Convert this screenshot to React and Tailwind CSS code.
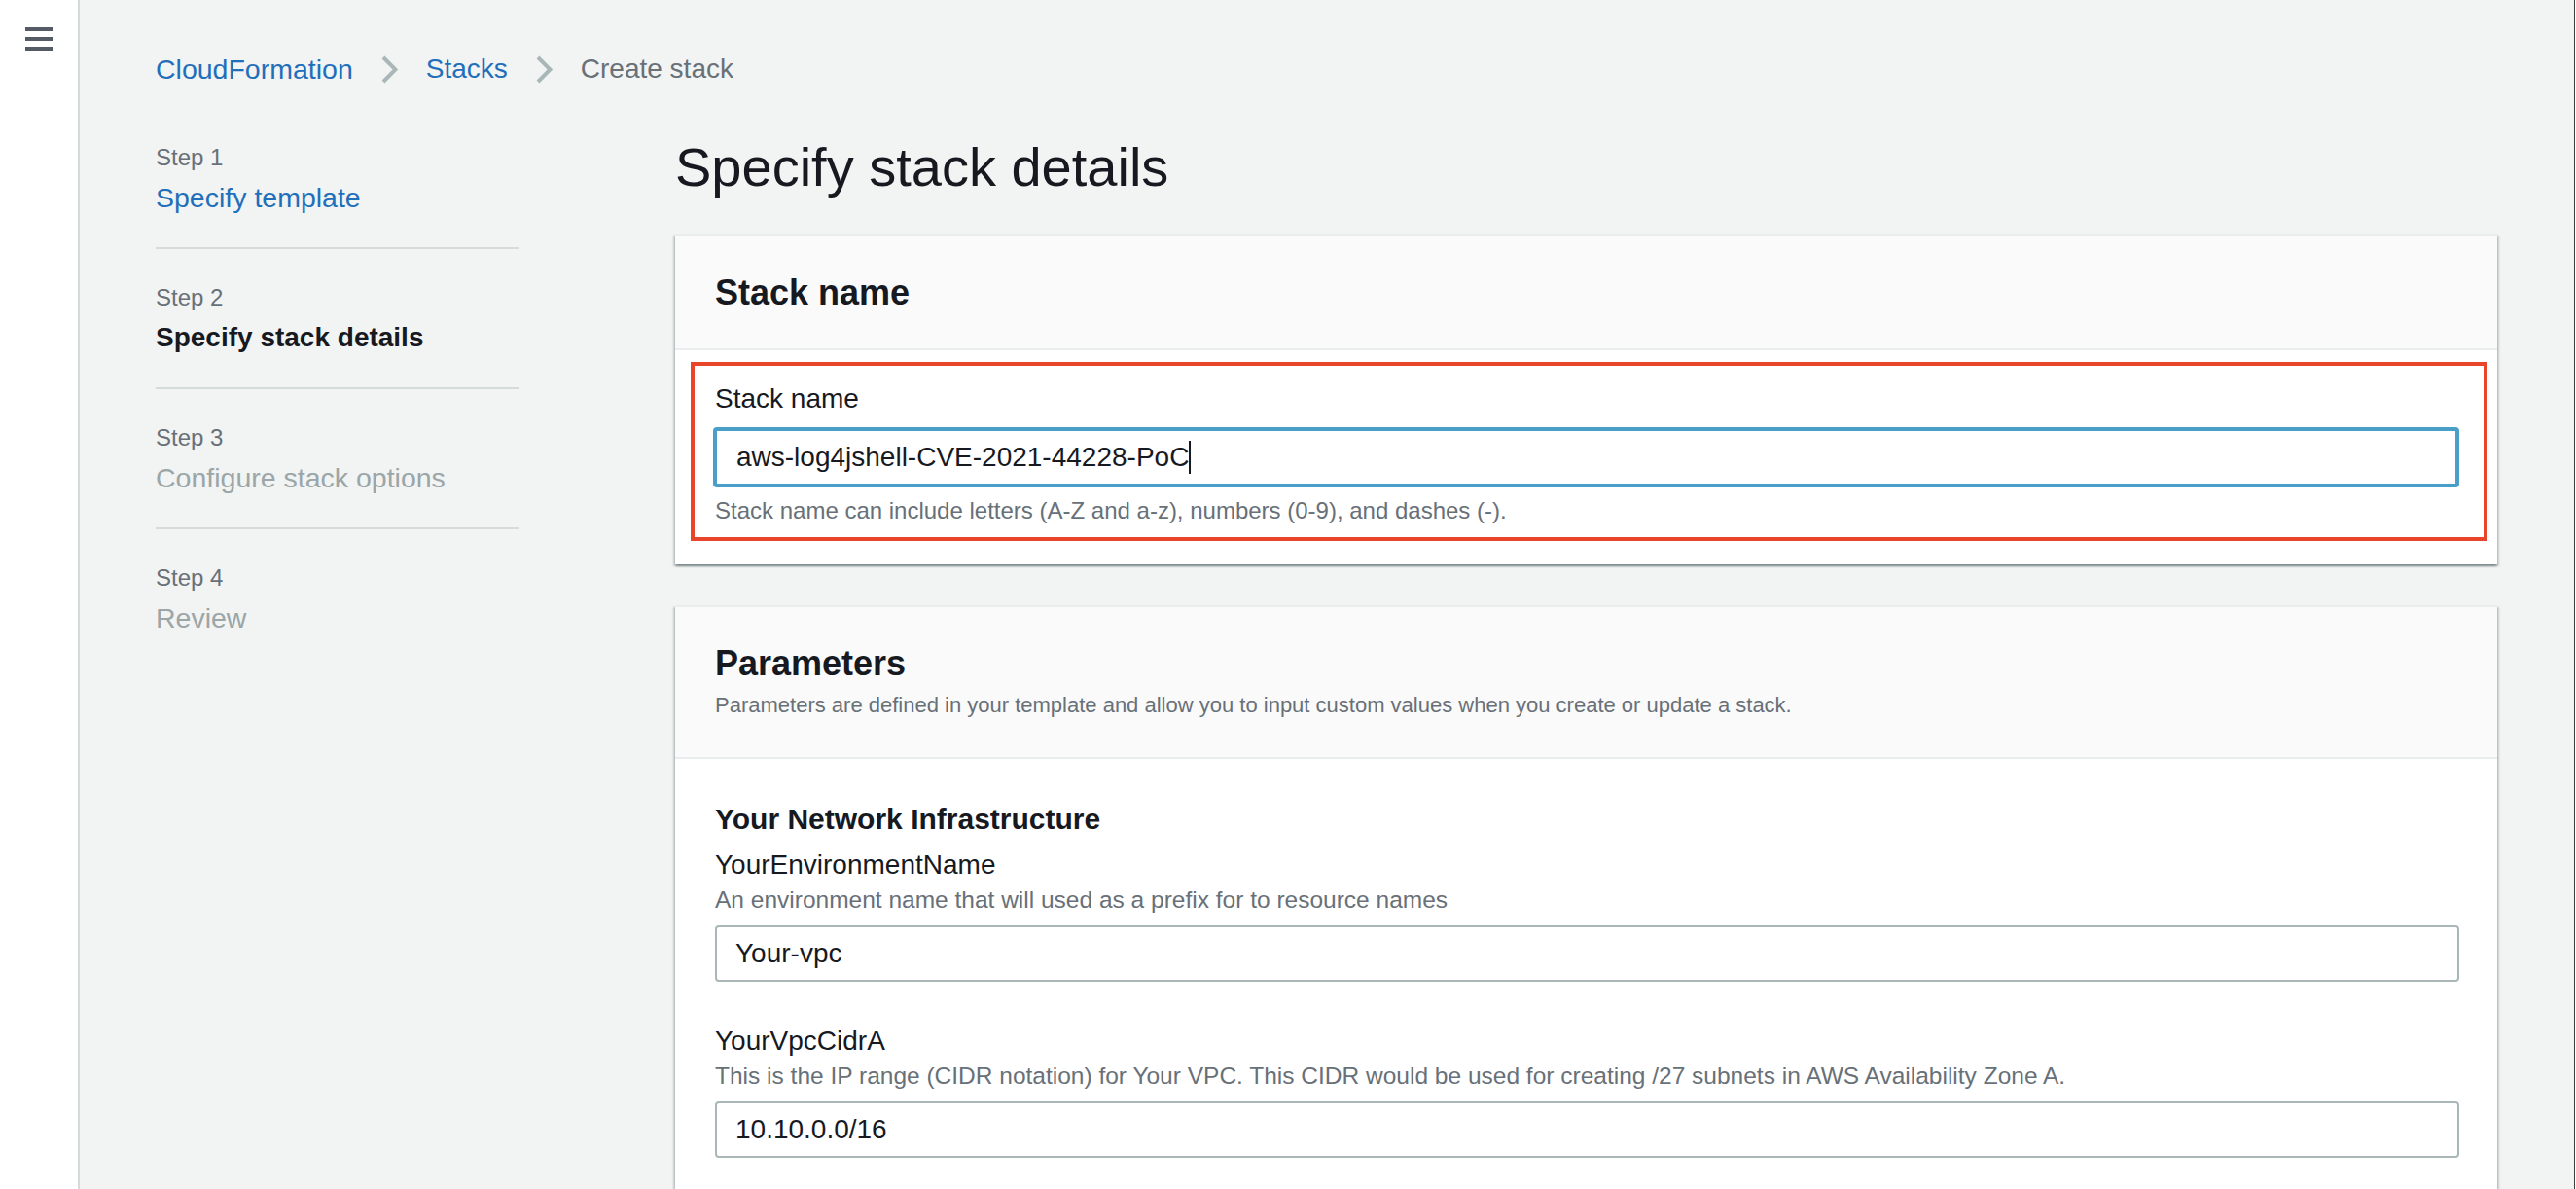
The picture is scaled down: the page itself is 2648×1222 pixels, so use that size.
import React from 'react';

const steps = [
    { label: 'Step 1', title: 'Specify template', state: 'done' },
    { label: 'Step 2', title: 'Specify stack details', state: 'current' },
    { label: 'Step 3', title: 'Configure stack options', state: 'todo' },
    { label: 'Step 4', title: 'Review', state: 'todo' },
];

const Chevron = () => (
    <svg width="17" height="29" viewBox="0 0 17 29" fill="none">
        <path d="M2 2 L14.5 14.5 L2 27" stroke="#aab7b8" strokeWidth="4" />
    </svg>
);

const Hamburger = () => (
    <div className="flex flex-col gap-[6px]">
        <div className="w-[28px] h-[4px] bg-[#545b64]" />
        <div className="w-[28px] h-[4px] bg-[#545b64]" />
        <div className="w-[28px] h-[4px] bg-[#545b64]" />
    </div>
);

const StepNav = () => (
    <nav className="w-[374px] shrink-0 pt-[8px]">
        {steps.map((step, i) => (
            <div key={step.label}>
                {i > 0 && <div className="h-[2px] bg-[#d5dbdb] mt-[28px] mb-[32px]" />}
                <div className="text-[24px] leading-[36px] text-[#687078]">{step.label}</div>
                <div
                    className={
                        step.state === 'done'
                            ? 'text-[28.5px] leading-[46px] text-[#1f6fbb]'
                            : step.state === 'current'
                            ? 'text-[28px] leading-[46px] font-bold text-[#16191f]'
                            : 'text-[28.5px] leading-[46px] text-[#9aa6a7]'
                    }
                >
                    {step.title}
                </div>
            </div>
        ))}
    </nav>
);

const Card = ({ children, className = '' }) => (
    <div
        className={`bg-white border-t-2 border-[#eaeded] shadow-[0_2px_2px_0_rgba(0,28,36,0.3),2px_2px_2px_0_rgba(0,28,36,0.15),-2px_2px_2px_0_rgba(0,28,36,0.15)] ${className}`}
    >
        {children}
    </div>
);

const Field = ({ label, description, value, className = '' }) => (
    <div className={className}>
        <div className="text-[28px] leading-[40px] text-[#16191f]">{label}</div>
        <div className="text-[24.5px] leading-[32px] text-[#687078]">{description}</div>
        <div className="mt-[10px] h-[58px] border-2 border-[#aab7b8] rounded-[4px] bg-white flex items-center pl-[19px] text-[28px] text-[#16191f]">
            {value}
        </div>
    </div>
);

export default function App() {
    return (
        <div className="flex h-[1222px] overflow-hidden bg-white font-['Liberation_Sans',Arial,sans-serif]">
            {/* Side navigation toggle */}
            <div className="w-[82px] shrink-0 bg-white border-r-2 border-[#d5dbdb] pt-[28px] pl-[26px]">
                <Hamburger />
            </div>

            <main className="flex-1 bg-[#f2f3f3] border-r border-[#3d3d3d] pl-[78px] pr-[79px]">
                {/* Breadcrumbs */}
                <div className="pt-[51px] flex items-center gap-[29px] h-[91px] text-[28px] leading-[40px]">
                    <span className="text-[#1f6fbb] text-[28.5px]">CloudFormation</span>
                    <Chevron />
                    <span className="text-[#1f6fbb]">Stacks</span>
                    <Chevron />
                    <span className="text-[#687078]">Create stack</span>
                </div>

                <div className="flex mt-[45px]">
                    <StepNav />

                    <div className="ml-[160px] flex-1">
                        <h1 className="text-[56px] leading-[72px] text-[#16191f] mb-[33px]">Specify stack details</h1>

                        {/* Stack name */}
                        <Card>
                            <div className="bg-[#fafafa] border-b-2 border-[#eaeded] pl-[41px] pt-[34px] pb-[33px]">
                                <h2 className="text-[36px] leading-[48px] font-bold text-[#16191f]">Stack name</h2>
                            </div>
                            <div className="pt-[12px] pb-[24px] pl-[16px] pr-[10px]">
                                <div className="border-4 border-[#e9452b] pt-[14px] pb-[11px] pl-[19px] pr-[25px]">
                                    <div className="ml-[2px] text-[28px] leading-[40px] text-[#16191f]">Stack name</div>
                                    <div className="mt-[9px] h-[62px] border-4 border-[#4a9fc8] rounded-[4px] bg-white flex items-center pl-[20px] text-[28px] text-[#16191f]">
                                        <span>aws-log4jshell-CVE-2021-44228-PoC</span>
                                        <span className="w-[2px] h-[34px] bg-[#16191f]" />
                                    </div>
                                    <div className="mt-[8px] ml-[2px] text-[24px] leading-[32px] text-[#687078]">
                                        Stack name can include letters (A-Z and a-z), numbers (0-9), and dashes (-).
                                    </div>
                                </div>
                            </div>
                        </Card>

                        {/* Parameters */}
                        <Card className="mt-[42px]">
                            <div className="bg-[#fafafa] border-b-2 border-[#eaeded] pl-[41px] pt-[34px] pb-[37px]">
                                <h2 className="text-[36px] leading-[48px] font-bold text-[#16191f]">Parameters</h2>
                                <p className="mt-[3px] text-[22px] leading-[32px] text-[#687078]">
                                    Parameters are defined in your template and allow you to input custom values when you create or update a stack.
                                </p>
                            </div>
                            <div className="pl-[41px] pr-[39px] pt-[42px] pb-[120px]">
                                <h3 className="text-[30px] leading-[40px] font-bold text-[#16191f]">Your Network Infrastructure</h3>
                                <Field
                                    className="mt-[7px]"
                                    label="YourEnvironmentName"
                                    description="An environment name that will used as a prefix for to resource names"
                                    value="Your-vpc"
                                />
                                <Field
                                    className="mt-[41px]"
                                    label="YourVpcCidrA"
                                    description="This is the IP range (CIDR notation) for Your VPC. This CIDR would be used for creating /27 subnets in AWS Availability Zone A."
                                    value="10.10.0.0/16"
                                />
                            </div>
                        </Card>
                    </div>
                </div>
            </main>
            <div className="w-px bg-white shrink-0" />
        </div>
    );
}
